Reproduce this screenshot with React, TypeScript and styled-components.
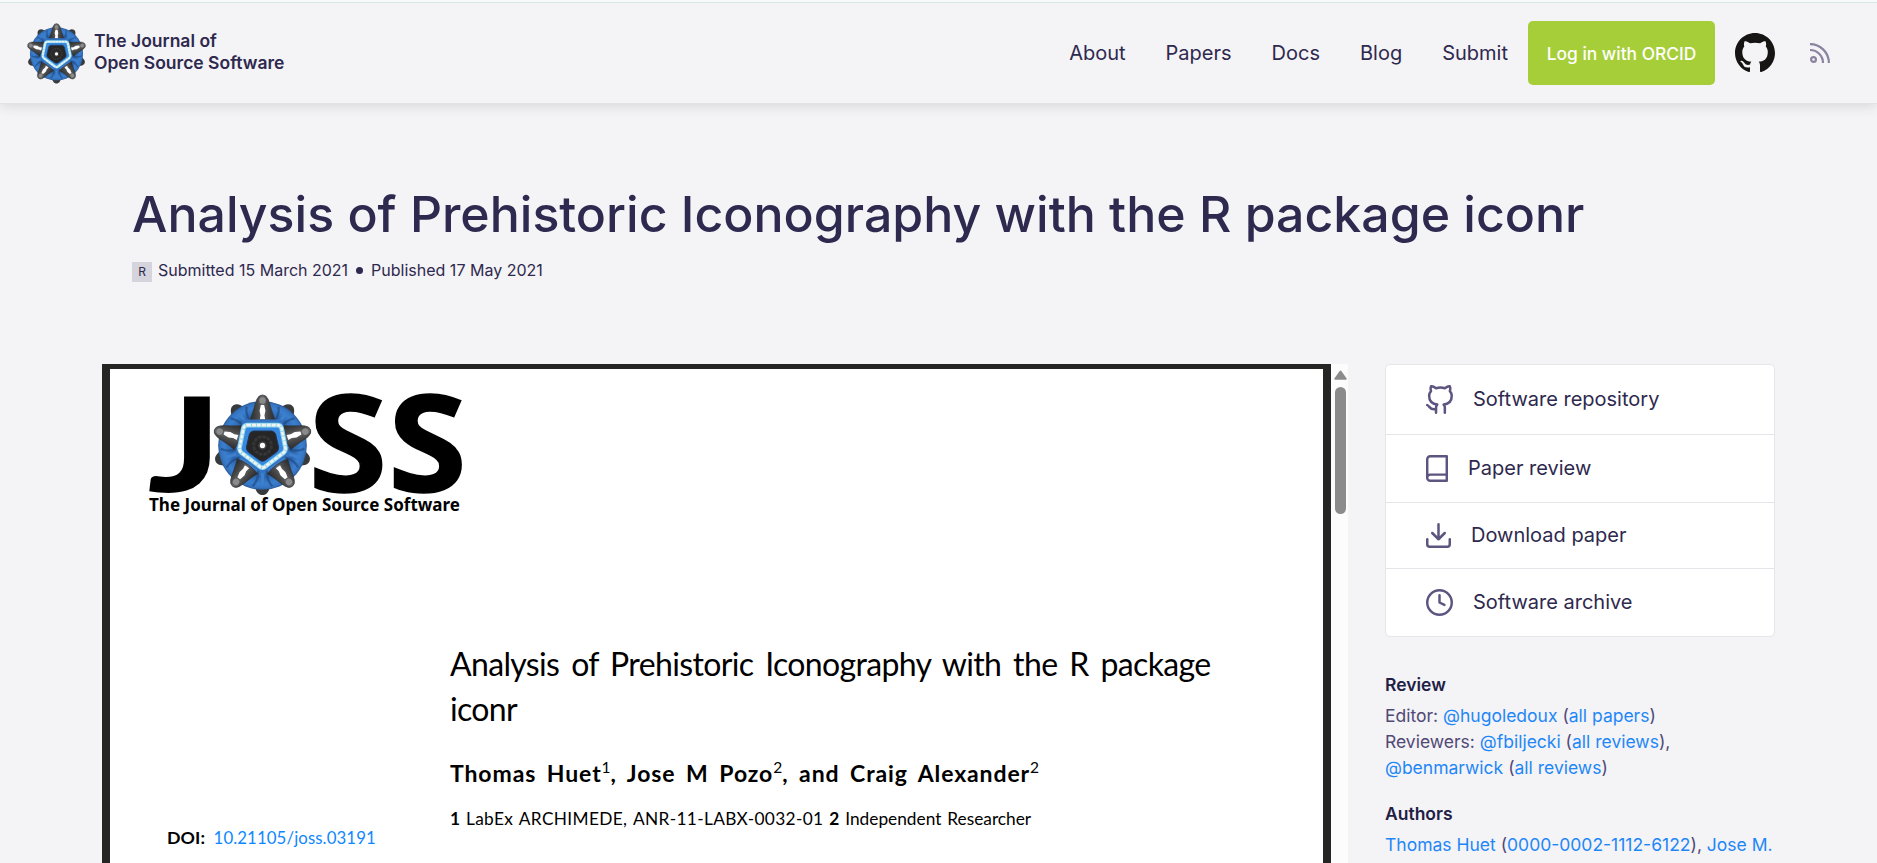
import React from "react";
import styled, { createGlobalStyle } from "styled-components";

const GlobalStyle = createGlobalStyle`
  *, *::before, *::after { box-sizing: border-box; }
  body {
    margin: 0;
    background: #f4f3f6;
    color: #2e294e;
    font-family: Inter, "Liberation Sans", sans-serif;
  }
  h1, h2, h3, p { margin: 0; }
  a { color: inherit; text-decoration: none; }
  svg { display: block; flex: none; }
`;

const Page = styled.div`
  height: 863px;
  overflow: hidden;
  display: flex;
  flex-direction: column;
`;

const Header = styled.header`
  flex: none;
  height: 104px;
  padding: 1px 47px 0 26px;
  border-top: 2px solid #f6fafb;
  border-bottom: 1px solid #e2e1e4;
  display: flex;
  align-items: center;
  justify-content: space-between;
  background: #f4f3f6;
  box-shadow: inset 0 1px 0 #d6e6e9, 0 2px 12px rgba(0, 0, 0, 0.12);
`;

const Brand = styled.a`
  display: flex;
  align-items: center;
  gap: 7px;
`;

const BrandName = styled.span`
  padding-bottom: 2px;
  font-size: 17.5px;
  font-weight: 600;
  line-height: 22.5px;
`;

const Nav = styled.nav`
  display: flex;
  align-items: center;
`;

const NavLink = styled.a`
  padding: 0 20px;
  font-size: 20px;
  line-height: 30px;
`;

const LoginButton = styled.a`
  width: 187px;
  height: 64px;
  display: grid;
  place-items: center;
  border-radius: 5px;
  background: #a6ce39;
  color: #fff;
  font-size: 17.4px;
  font-weight: 500;
`;

const IconLink = styled.a<{ $gap: number }>`
  margin-left: ${(p) => p.$gap}px;
  color: #161514;
`;

const Intro = styled.section`
  flex: none;
  padding: 80px 0 82px 132px;
`;

const Title = styled.h1`
  font-size: 50px;
  font-weight: 500;
  line-height: 60px;
  white-space: nowrap;
`;

const Meta = styled.div`
  margin-top: 14px;
  height: 24px;
  display: flex;
  align-items: center;
  font-size: 16px;
  line-height: 24px;
`;

const LangBadge = styled.span`
  width: 20px;
  height: 20px;
  margin: 3px 6px 0 0;
  display: grid;
  place-items: center;
  background: #d5d4dc;
  font-size: 12px;
  line-height: 20px;
`;

const Dot = styled.span`
  width: 7px;
  height: 7px;
  margin: 0 8px;
  border-radius: 50%;
  background: #2e294e;
`;

const Body = styled.main`
  flex: 1;
  min-height: 0;
  display: flex;
  align-items: stretch;
  padding-left: 102px;
`;

const Viewer = styled.section`
  width: 1246px;
  flex: none;
  display: flex;
  background: #252524;
`;

const Paper = styled.article`
  flex: 1;
  margin: 5px 8px 0;
  padding: 22px 0 0 36px;
  background: #fff;
  color: #000;
  font-family: Lato, "Liberation Sans", sans-serif;
`;

const PaperColumns = styled.div`
  display: grid;
  grid-template-columns: 283px 1fr;
  padding: 125px 0 0 21px;
`;

const Doi = styled.p`
  padding-top: 185px;
  font-size: 16.8px;
  line-height: 22px;
  letter-spacing: 0.1px;

  b { margin-right: 4px; font-size: 17.8px; }
`;

const DocLink = styled.a`
  color: #0f87ff;
`;

const PaperTitle = styled.h2`
  font-size: 32px;
  font-weight: 400;
  line-height: 45px;
  letter-spacing: -0.65px;
  word-spacing: 4.3px;
`;

const PaperAuthors = styled.p`
  margin-top: 27px;
  font-size: 23px;
  font-weight: 700;
  line-height: 30px;
  letter-spacing: 0.9px;
  word-spacing: 4.1px;
`;

const Mark = styled.sup`
  font-size: 15.5px;
  font-weight: 400;
  line-height: 0;
  letter-spacing: 0;
  vertical-align: 9px;
`;

const Affiliations = styled.p`
  margin-top: 20px;
  font-size: 17.3px;
  line-height: 22px;
  word-spacing: 1.5px;
`;

const Institute = styled.span`
  letter-spacing: 0.34px;
`;

const ScrollTrack = styled.div`
  width: 17px;
  padding: 6px 0 0 1px;
  display: flex;
  flex-direction: column;
  align-items: center;
  gap: 7px;
  background: #fcfcfc;
`;

const ScrollThumb = styled.div`
  width: 11px;
  height: 127px;
  border-radius: 6px;
  background: #8b8b8b;
`;

const Sidebar = styled.aside`
  width: 390px;
  margin-left: 37px;
`;

const LinkCard = styled.div`
  border: 1px solid #e6e5ea;
  border-radius: 5px;
  background: #fff;
`;

const CardRow = styled.a`
  display: flex;
  align-items: center;
  gap: 20px;
  padding: 20px 0 20px 40px;
  font-size: 20px;
  line-height: 25px;

  & + & { border-top: 1px solid #e6e5ea; }
  svg { color: #5d5480; }
`;

const Group = styled.section<{ $top: number }>`
  margin-top: ${(p) => p.$top}px;
  font-size: 17.5px;
  line-height: 26px;
`;

const GroupTitle = styled.h3`
  margin-bottom: 5px;
  font-size: 17.5px;
  font-weight: 600;
  color: #221d45;
`;

const GroupText = styled.p`
  color: #504975;
  white-space: nowrap;
`;

const Link = styled.a`
  color: #1e87f7;
`;

const angles = [0, 72, 144, 216, 288];

/* Radiolarian emblem: five grey spikes around a blue body with a glowing pentagon. */
function Emblem({ id }: { id: string }) {
  const body = `${id}-body`;
  const spike = `${id}-spike`;
  return (
    <>
      <defs>
        <radialGradient id={body} gradientUnits="userSpaceOnUse" cx="0" cy="0" r="136">
          <stop offset="0.5" stopColor="#3d84d6" />
          <stop offset="0.7" stopColor="#2d66ae" />
          <stop offset="0.86" stopColor="#3a7fd0" />
          <stop offset="0.95" stopColor="#3673be" />
          <stop offset="1" stopColor="#25548f" />
        </radialGradient>
        <linearGradient id={spike} x1="0" y1="0" x2="1" y2="0">
          <stop offset="0" stopColor="#292929" />
          <stop offset="0.3" stopColor="#484848" />
          <stop offset="0.5" stopColor="#666" />
          <stop offset="0.7" stopColor="#484848" />
          <stop offset="1" stopColor="#292929" />
        </linearGradient>
      </defs>
      {angles.map((a) => (
        <path key={a} transform={`rotate(${a + 36})`} d="M-26 -118C-20 -141 -12 -151 0 -151S20 -141 26 -118Z" fill="#393a3c" />
      ))}
      <circle r="135" fill={`url(#${body})`} />
      {angles.map((a) => (
        <g key={a} transform={`rotate(${a + 36})`}>
          <path d="M-13 -75Q-12 -106 -30 -124M13 -75Q12 -106 30 -124" fill="none" stroke="#1b3f73" strokeWidth="7" opacity="0.55" />
          <path d="M0 -84V-116" stroke="#3d80cc" strokeWidth="10" />
        </g>
      ))}
      {angles.map((a) => (
        <g key={a} transform={`rotate(${a})`}>
          <path
            d="M-39 -78C-29 -96 -25 -122 -17 -141Q-11 -154 0 -154T17 -141C25 -122 29 -96 39 -78Q0 -68 -39 -78Z"
            fill={`url(#${spike})`}
            stroke="#2e3238"
            strokeWidth="2"
          />
          <circle cy="-137" r="10" fill="#8a8a8a" />
          <path d="M-5 -123L5 -123L9 -106L6 -92L8 -80H-8L-6 -92L-9 -106Z" fill="#fff" />
        </g>
      ))}
      <path d="M-56 -74H56L77 22L0 79L-77 22Z" fill="#3479c9" stroke="#3272c0" strokeWidth="10" strokeLinejoin="round" />
      <path d="M-47 -62H47Q55 -61 58 -53L70 8Q71 16 64 22L7 65Q0 70 -7 65L-64 22Q-71 16 -70 8L-58 -53Q-55 -61 -47 -62Z" fill="#3788df" stroke="#8fd8ef" strokeWidth="14" />
      <path d="M-47 -62H47Q55 -61 58 -53L70 8Q71 16 64 22L7 65Q0 70 -7 65L-64 22Q-71 16 -70 8L-58 -53Q-55 -61 -47 -62Z" fill="none" stroke="#f1f3ee" strokeWidth="8" strokeDasharray="12 3" />
      <path d="M-28 -44H28Q38 -42 40 -34L49 5Q50 13 43 20L7 46Q0 50 -7 46L-43 20Q-50 13 -49 5L-40 -34Q-38 -42 -28 -44Z" fill="#262627" stroke="#1f3352" strokeWidth="3" />
      <circle r="27" fill="none" stroke="#363637" strokeWidth="9" strokeDasharray="11 3" />
      <circle r="13" fill="#424242" />
      <circle r="8" fill="#fff" />
    </>
  );
}

const BrandMark = () => (
  <svg width="61" height="61" viewBox="-155 -157 310 310" aria-hidden="true">
    <Emblem id="brand" />
  </svg>
);

const PaperLogo = () => (
  <svg width="320" height="125" viewBox="-3 -3 320 125" role="img" aria-label="JOSS">
    <g fill="#000" fontFamily="Lato, sans-serif" fontWeight="900">
      <text transform="translate(-1.5 97.5) scale(1.3 1)" fontSize="132">J</text>
    </g>
    <g fill="#000" stroke="#000" strokeWidth="1.5" fontFamily='"Noto Sans", sans-serif' fontWeight="700" fontSize="135">
      <text transform="translate(159.5 98) scale(1.06 1)">S</text>
      <text transform="translate(239 98) scale(1.06 1)">S</text>
    </g>
    <g transform="translate(113.5 51.5) scale(0.3285)">
      <Emblem id="paper" />
    </g>
    <text x="0" y="117" textLength="311" fontFamily='"Noto Sans", sans-serif' fontWeight="700" fontSize="17">
      The Journal of Open Source Software
    </text>
  </svg>
);

const GithubMark = () => (
  <svg width="40" height="40" viewBox="0 0 16 16" fill="currentColor">
    <path d="M8 0C3.58 0 0 3.58 0 8c0 3.54 2.29 6.53 5.47 7.59.4.07.55-.17.55-.38 0-.19-.01-.82-.01-1.49-2.01.37-2.53-.49-2.69-.94-.09-.23-.48-.94-.82-1.13-.28-.15-.68-.52-.01-.53.63-.01 1.08.58 1.23.82.72 1.21 1.87.87 2.33.66.07-.52.28-.87.51-1.07-1.78-.2-3.64-.89-3.64-3.95 0-.87.31-1.59.82-2.15-.08-.2-.36-1.02.08-2.12 0 0 .67-.21 2.2.82.64-.18 1.32-.27 2-.27s1.36.09 2 .27c1.53-1.04 2.2-.82 2.2-.82.44 1.1.16 1.92.08 2.12.51.56.82 1.27.82 2.15 0 3.07-1.87 3.75-3.65 3.95.29.25.54.73.54 1.48 0 1.07-.01 1.93-.01 2.2 0 .21.15.46.55.38A8.01 8.01 0 0 0 16 8c0-4.42-3.58-8-8-8z" />
  </svg>
);

const RssIcon = () => (
  <svg width="20" height="20" viewBox="0 0 20 20" fill="none" stroke="#8a839f" strokeWidth="2.2">
    <circle cx="3.5" cy="16.5" r="2.4" />
    <path d="M0 7A13 13 0 0 1 13 20M0 1.1A18.9 18.9 0 0 1 18.9 20" />
  </svg>
);

const icons = {
  repository: {
    box: "1 0 21.5 23", width: 27, height: 29,
    path: "M9 19c-5 1.5-5-2.5-7-3m14 6v-3.87a3.37 3.37 0 0 0-.94-2.61c3.14-.35 6.44-1.54 6.44-7A5.44 5.44 0 0 0 20 4.77 5.07 5.07 0 0 0 19.91 1S18.73.65 16 2.48a13.38 13.38 0 0 0-7 0C6.27.65 5.09 1 5.09 1A5.07 5.07 0 0 0 5 4.77a5.44 5.44 0 0 0-1.5 3.78c0 5.42 3.3 6.61 6.44 7A3.37 3.37 0 0 0 9 18.13V22",
  },
  review: {
    box: "3 1 18 22", width: 22, height: 27,
    path: "M4 19.5A2.5 2.5 0 0 1 6.5 17H20M6.5 2H20v20H6.5A2.5 2.5 0 0 1 4 19.5v-15A2.5 2.5 0 0 1 6.5 2z",
  },
  download: {
    box: "2 2 20 20", width: 25, height: 25,
    path: "M21 15v4a2 2 0 0 1-2 2H5a2 2 0 0 1-2-2v-4M7 10l5 5 5-5M12 15V3",
  },
  archive: {
    box: "1 1 22 22", width: 27, height: 27,
    path: "M12 2a10 10 0 1 0 0 20 10 10 0 1 0 0-20zM12 6v6l4 2",
  },
};

function LineIcon({ name }: { name: keyof typeof icons }) {
  const { box, width, height, path } = icons[name];
  return (
    <svg width={width} height={height} viewBox={box} fill="none" stroke="currentColor" strokeWidth="2" strokeLinecap="round" strokeLinejoin="round">
      <path d={path} />
    </svg>
  );
}

const navItems = ["About", "Papers", "Docs", "Blog", "Submit"];

const cardItems: { icon: keyof typeof icons; label: string }[] = [
  { icon: "repository", label: "Software repository" },
  { icon: "review", label: "Paper review" },
  { icon: "download", label: "Download paper" },
  { icon: "archive", label: "Software archive" },
];

export default function App() {
  return (
    <Page>
      <GlobalStyle />
      <Header>
        <Brand href="#">
          <BrandMark />
          <BrandName>
            The Journal of
            <br />
            Open Source Software
          </BrandName>
        </Brand>
        <Nav>
          {navItems.map((item) => (
            <NavLink key={item} href="#">{item}</NavLink>
          ))}
          <LoginButton href="#">Log in with ORCID</LoginButton>
          <IconLink href="#" $gap={20} aria-label="GitHub">
            <GithubMark />
          </IconLink>
          <IconLink href="#" $gap={35} aria-label="RSS feed">
            <RssIcon />
          </IconLink>
        </Nav>
      </Header>

      <Intro>
        <Title>Analysis of Prehistoric Iconography with the R package iconr</Title>
        <Meta>
          <LangBadge>R</LangBadge>
          <span>Submitted 15 March 2021</span>
          <Dot />
          <span>Published 17 May 2021</span>
        </Meta>
      </Intro>

      <Body>
        <Viewer>
          <Paper>
            <PaperLogo />
            <PaperColumns>
              <Doi>
                <b>DOI:</b> <DocLink href="#">10.21105/joss.03191</DocLink>
              </Doi>
              <div>
                <PaperTitle>
                  Analysis of Prehistoric Iconography with the R package
                  <br />
                  iconr
                </PaperTitle>
                <PaperAuthors>
                  Thomas Huet<Mark>1</Mark>, Jose M Pozo<Mark>2</Mark>, and Craig Alexander<Mark>2</Mark>
                </PaperAuthors>
                <Affiliations>
                  <b>1</b> <Institute>LabEx ARCHIMEDE, ANR-11-LABX-0032-01</Institute> <b>2</b> Independent Researcher
                </Affiliations>
              </div>
            </PaperColumns>
          </Paper>
          <ScrollTrack>
            <svg width="13" height="10" viewBox="0 0 13 10">
              <path d="M6.5 1.5L11.7 8.8H1.3Z" fill="#8b8b8b" stroke="#8b8b8b" strokeWidth="2" strokeLinejoin="round" />
            </svg>
            <ScrollThumb />
          </ScrollTrack>
        </Viewer>

        <Sidebar>
          <LinkCard>
            {cardItems.map(({ icon, label }) => (
              <CardRow key={label} href="#">
                <LineIcon name={icon} />
                <span>{label}</span>
              </CardRow>
            ))}
          </LinkCard>
          <Group $top={35}>
            <GroupTitle>Review</GroupTitle>
            <GroupText>
              Editor: <Link href="#">@hugoledoux</Link> (<Link href="#">all papers</Link>)
              <br />
              Reviewers: <Link href="#">@fbiljecki</Link> (<Link href="#">all reviews</Link>),
              <br />
              <Link href="#">@benmarwick</Link> (<Link href="#">all reviews</Link>)
            </GroupText>
          </Group>
          <Group $top={20}>
            <GroupTitle>Authors</GroupTitle>
            <GroupText>
              <Link href="#">Thomas Huet</Link> (<Link href="#">0000-0002-1112-6122</Link>), <Link href="#">Jose M.</Link>
              <br />
              <Link href="#">Pozo</Link> (<Link href="#">0000-0002-0759-3510</Link>),
            </GroupText>
          </Group>
        </Sidebar>
      </Body>
    </Page>
  );
}
